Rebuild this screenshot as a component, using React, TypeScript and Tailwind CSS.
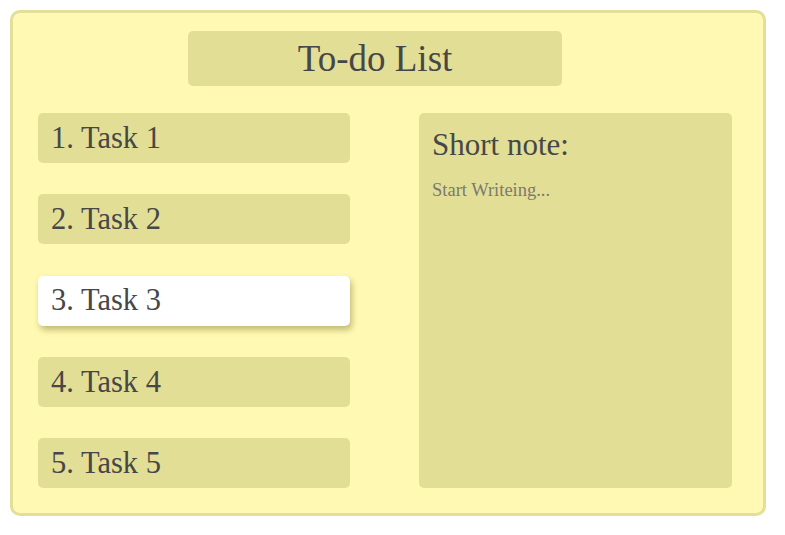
import React from "react";

const tasks = ["1. Task 1", "2. Task 2", "3. Task 3", "4. Task 4", "5. Task 5"];

export default function App() {
  return (
    <div className="bg-white w-[785px] h-[535px] pt-[10px] pl-[10px]" style={{ fontFamily: '"Liberation Serif", "Times New Roman", serif' }}>
      <div className="w-[756px] h-[506px] border-[3px] border-[#e3df97] rounded-[10px] bg-[#fff9b3] pt-[18px] flex flex-col">
        <div className="ml-[175px] w-[374px] h-[55px] bg-[#e2de96] rounded-[5px] flex items-center justify-center text-[37px] text-[#474747] leading-none">
          To-do List
        </div>
        <div className="mt-[27px] flex pl-[25px]">
          <div className="w-[312px] h-[375px] flex flex-col justify-between">
            {tasks.map((t, i) => (
              <div
                key={t}
                className={
                  i === 2
                    ? "h-[50px] rounded-[5px] bg-white pl-[13px] flex items-center text-[30.5px] text-[#474747] leading-none shadow-[2px_4px_6px_rgba(120,110,40,0.45)]"
                    : "h-[50px] rounded-[5px] bg-[#e2de96] pl-[13px] flex items-center text-[30.5px] text-[#474747] leading-none"
                }
              >
                {t}
              </div>
            ))}
          </div>
          <div className="ml-[69px] w-[313px] h-[375px] bg-[#e2de96] rounded-[5px] px-[13px] pt-[16px] flex flex-col">
            <div className="text-[31px] text-[#474747] leading-none">Short note:</div>
            <div className="mt-[21px] text-[18.5px] text-[#7a7a70] leading-none">Start Writeing...</div>
          </div>
        </div>
      </div>
    </div>
  );
}
